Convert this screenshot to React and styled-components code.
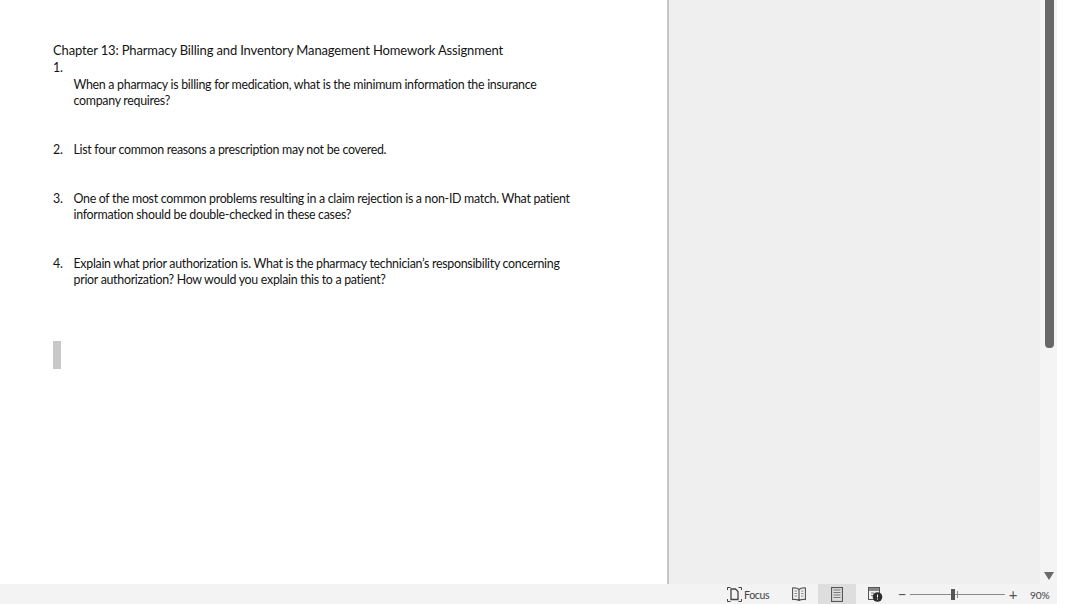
import React from 'react';
import styled, { createGlobalStyle } from 'styled-components';

const GlobalStyle = createGlobalStyle`
  html, body { margin: 0; padding: 0; background: #fff; overflow: hidden; }
  body { font-family: Lato, "Open Sans", sans-serif; }
`;

const Window = styled.div`
  width: 1074px;
  height: 604px;
  background: #fff;
`;
const Word = styled.div`
  width: 1057px;
  height: 604px;
  display: flex;
  flex-direction: column;
`;
const Workspace = styled.div`
  flex: 1;
  display: flex;
  min-height: 0;
`;
const Page = styled.div`
  width: 667px;
  padding: 42px 0 0 53px;
  box-sizing: border-box;
  background: #fff;
  color: #141414;
  font-size: 12.4px;
  letter-spacing: -0.29px;
  line-height: 16px;
`;
const Title = styled.div`
  font-size: 13px;
  letter-spacing: -0.15px;
  line-height: 17px;
  margin-bottom: 1px;
`;
const Question = styled.div`
  display: grid;
  grid-template-columns: 20.5px 560px;
  white-space: nowrap;
  margin-top: ${p => p.$top || 0}px;
  margin-bottom: ${p => p.$gap}px;
`;
const Mark = styled.div`
  width: 8px;
  height: 28px;
  background: #c8c8c8;
  margin-top: 53px;
`;
const Gutter = styled.div`
  flex: 1;
  background: #efefef;
  border-left: 2px solid #c6c6c6;
`;
const ScrollTrack = styled.div`
  width: 17px;
  background: #f4f4f4;
  position: relative;
`;
const Thumb = styled.div`
  width: 9px;
  height: 348px;
  margin-left: 5px;
  background: #686868;
  border-radius: 0 0 4px 4px;
`;
const ArrowDown = styled.div`
  position: absolute;
  bottom: 4px;
  left: 4px;
  width: 0;
  height: 0;
  border-left: 5px solid transparent;
  border-right: 5px solid transparent;
  border-top: 8px solid #6a6a6a;
`;
const StatusBar = styled.div`
  height: 20px;
  background: #f3f3f3;
  display: flex;
  align-items: center;
  padding-left: 727px;
  color: #444;
`;
const FocusButton = styled.div`
  display: flex;
  align-items: center;
  gap: 2px;
  width: 47px;
  font-size: 10.6px;
  letter-spacing: -0.35px;
`;
const FocusLabel = styled.span`
  padding-top: 1px;
`;
const ViewRow = styled.div`
  display: flex;
  margin-left: 6px;
`;
const ViewButton = styled.div`
  width: 38px;
  height: 20px;
  display: flex;
  align-items: center;
  justify-content: center;
  background: ${p => (p.$active ? '#dedede' : 'transparent')};
`;
const Zoom = styled.div`
  display: flex;
  align-items: center;
  margin-left: 4px;
`;
const ZoomSign = styled.span`
  width: 8px;
  height: 20px;
  display: flex;
  align-items: center;
  justify-content: center;
  font-size: 15px;
  color: #555;
`;
const Slider = styled.div`
  width: 95px;
  height: 1px;
  margin: 0 4px;
  background: #8a8a8a;
  position: relative;
`;
const Knob = styled.div`
  position: absolute;
  left: 41px;
  top: -5px;
  width: 4px;
  height: 11px;
  background: #555;
`;
const Tick = styled.div`
  position: absolute;
  left: 47px;
  top: -3px;
  width: 1px;
  height: 7px;
  background: #8a8a8a;
`;
const Percent = styled.span`
  margin-left: 13px;
  padding-top: 1px;
  font-size: 10.2px;
  letter-spacing: -0.2px;
`;

const FocusIcon = () => (
  <svg width="15" height="15" viewBox="0 0 15 15" fill="none" stroke="#444">
    <path d="M.5 3V.5h3M11.500.5h3V3M.5 12v2.500h3M11.500 14.500h3V12" />
    <path d="M4 2h4.500L11 4.500V12.500H4z" strokeWidth="1.300" />
  </svg>
);
const ReadIcon = () => (
  <svg width="14" height="14" viewBox="0 0 14 14" fill="none" stroke="#555">
    <path d="M7 2.500C5.500 1 3 .8.500 1v11.500c2.500-.2 5 0 6.500 1 1.500-1 4-1.200 6.500-1V1C11 .8 8.500 1 7 2.500zM7 2.500V13.500" strokeWidth="1.200" />
    <path d="M2.500 4h2.500M2.500 6.500h2.500M2.500 9h2.500M9 4h2.500M9 6.500h2.500M9 9h2.500" stroke="#888" />
  </svg>
);
const PrintIcon = () => (
  <svg width="12" height="15" viewBox="0 0 12 15" fill="none" stroke="#555">
    <rect x=".5" y=".5" width="11" height="14" strokeWidth="1.200" />
    <path d="M2.500 3h7M2.500 5.500h7M2.500 8h7M2.500 10.500h7" stroke="#777" />
  </svg>
);
const WebIcon = () => (
  <svg width="15" height="15" viewBox="0 0 15 15" fill="none">
    <rect x=".5" y=".5" width="11" height="12" stroke="#555" />
    <rect x="1" y="1" width="10" height="3" fill="#888" />
    <path d="M3 6h3M3 8.500h2" stroke="#777" />
    <circle cx="9.500" cy="10" r="4.800" fill="#2e2e2e" />
    <path d="M9.500 7.500v3M9.500 11.500v1" stroke="#fff" />
  </svg>
);

export default function App() {
  return (
    <Window>
      <GlobalStyle />
      <Word>
        <Workspace>
          <Page>
            <Title>Chapter 13: Pharmacy Billing and Inventory Management Homework Assignment</Title>
            <div>1.</div>
            <Question $top={1} $gap={33}>
              <span />
              <div>When a pharmacy is billing for medication, what is the minimum information the insurance<br />company requires?</div>
            </Question>
            <Question $gap={33}>
              <span>2.</span>
              <div>List four common reasons a prescription may not be covered.</div>
            </Question>
            <Question $gap={33}>
              <span>3.</span>
              <div>One of the most common problems resulting in a claim rejection is a non-ID match. What patient<br />information should be double-checked in these cases?</div>
            </Question>
            <Question $gap={0}>
              <span>4.</span>
              <div>Explain what prior authorization is. What is the pharmacy technician’s responsibility concerning<br />prior authorization? How would you explain this to a patient?</div>
            </Question>
            <Mark />
          </Page>
          <Gutter />
          <ScrollTrack>
            <Thumb />
            <ArrowDown />
          </ScrollTrack>
        </Workspace>
        <StatusBar>
          <FocusButton><FocusIcon /><FocusLabel>Focus</FocusLabel></FocusButton>
          <ViewRow>
            <ViewButton><ReadIcon /></ViewButton>
            <ViewButton $active><PrintIcon /></ViewButton>
            <ViewButton><WebIcon /></ViewButton>
          </ViewRow>
          <Zoom>
            <ZoomSign>−</ZoomSign>
            <Slider><Knob /><Tick /></Slider>
            <ZoomSign>+</ZoomSign>
            <Percent>90%</Percent>
          </Zoom>
        </StatusBar>
      </Word>
    </Window>
  );
}
